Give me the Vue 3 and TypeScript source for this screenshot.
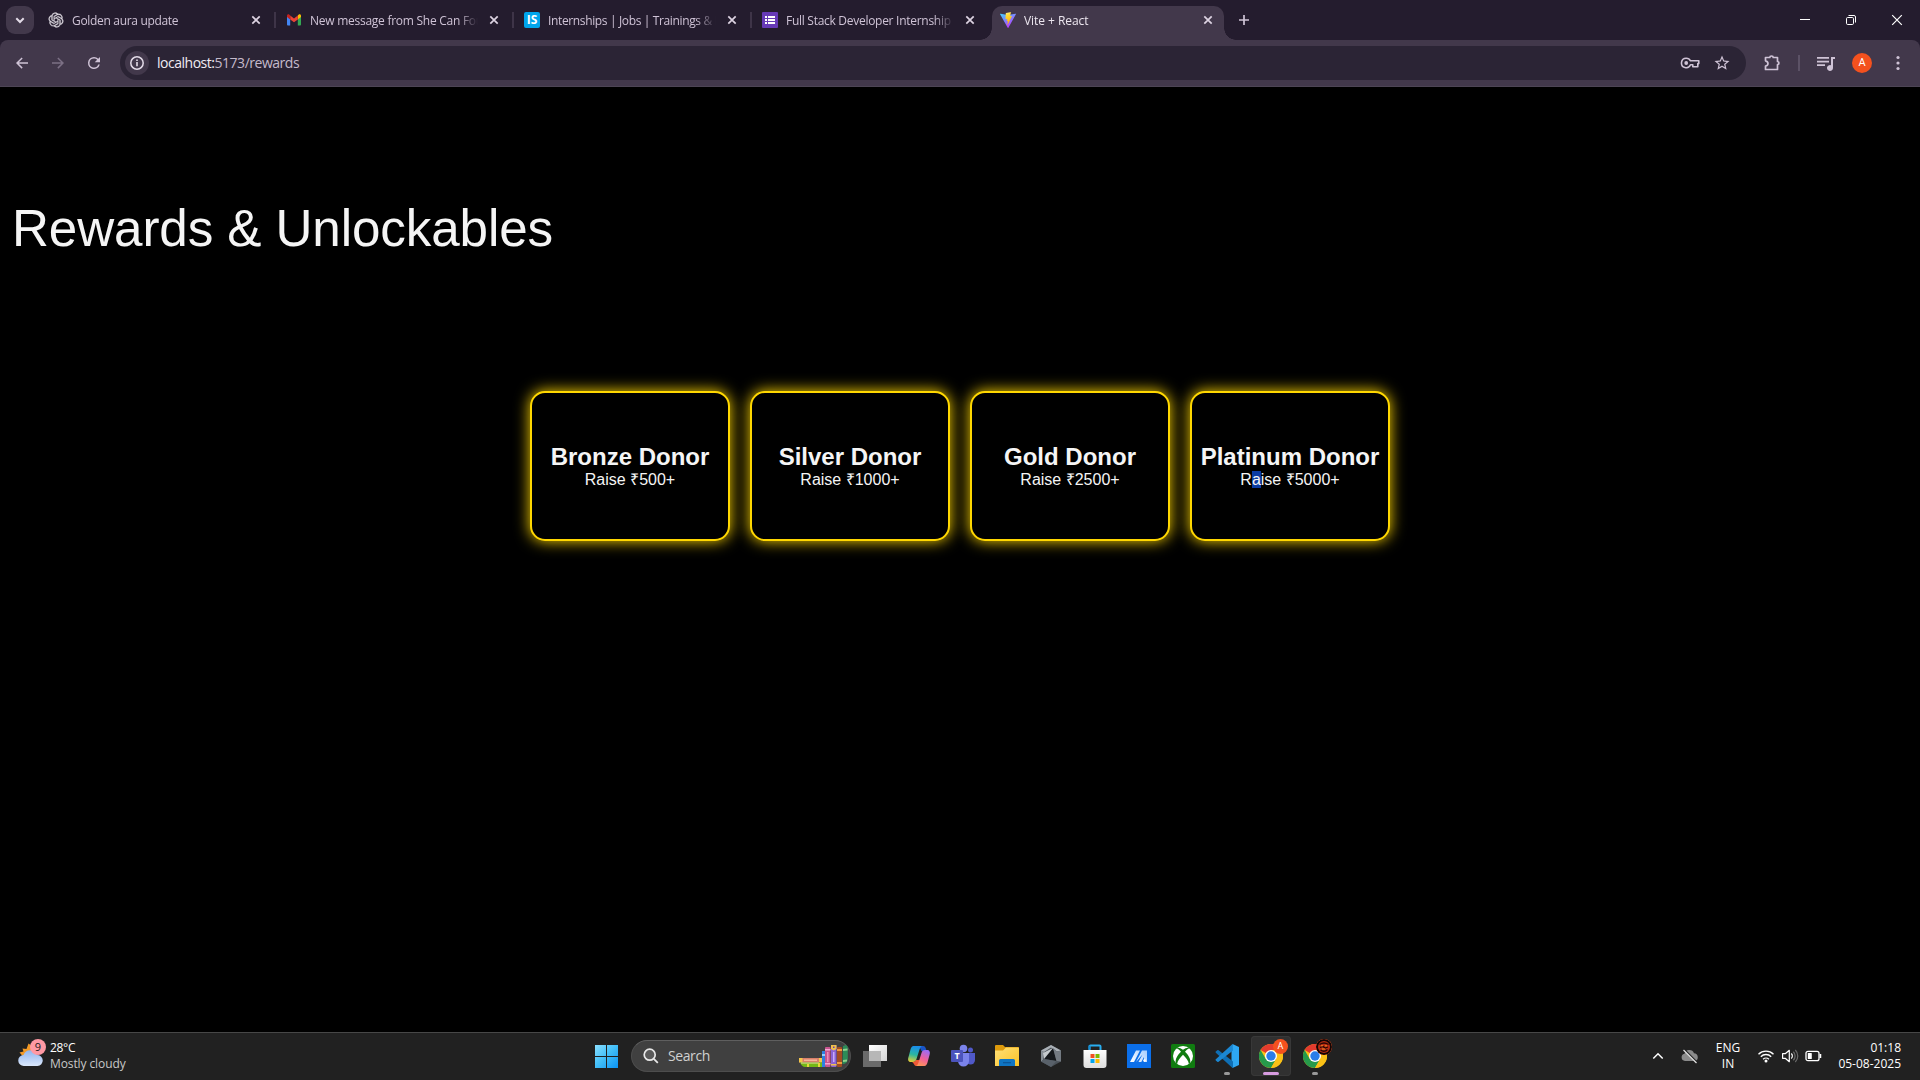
<script setup lang="ts">
interface Tab {
  id: string
  title: string
  spacing: number
  active?: boolean
}

interface Reward {
  name: string
  lead: string
  marked: string
  rest: string
}

const tabs: Tab[] = [
  { id: 'chat', title: 'Golden aura update', spacing: -0.32 },
  { id: 'mail', title: 'New message from She Can Fou', spacing: -0.26 },
  { id: 'is', title: 'Internships | Jobs | Trainings & P', spacing: -0.36 },
  { id: 'form', title: 'Full Stack Developer Internship -', spacing: -0.28 },
  { id: 'vite', title: 'Vite + React', spacing: -0.05, active: true },
]

const rewards: Reward[] = [
  { name: 'Bronze Donor', lead: 'Raise ₹500+', marked: '', rest: '' },
  { name: 'Silver Donor', lead: 'Raise ₹1000+', marked: '', rest: '' },
  { name: 'Gold Donor', lead: 'Raise ₹2500+', marked: '', rest: '' },
  { name: 'Platinum Donor', lead: 'R', marked: 'a', rest: 'ise ₹5000+' },
]
</script>

<template>
  <div class="screen">
    <header class="tabstrip">
      <div class="tab-search">
        <svg width="28" height="28" viewBox="0 0 28 28"><path d="M10.3 12.3l3.7 3.7 3.7-3.7" fill="none" stroke="#e3dbe8" stroke-width="2" /></svg>
      </div>
      <template v-for="(tab, i) in tabs" :key="tab.id">
        <div class="tab" :class="{ active: tab.active }">
          <svg v-if="tab.id === 'chat'" class="favicon" viewBox="-1 -1 26 26"><path fill="#dcd7df" stroke="#dcd7df" stroke-width=".5" d="M22.2819 9.8211a5.9847 5.9847 0 0 0-.5157-4.9108 6.0462 6.0462 0 0 0-6.5098-2.9A6.0651 6.0651 0 0 0 4.9807 4.1818a5.9847 5.9847 0 0 0-3.9977 2.9 6.0462 6.0462 0 0 0 .7427 7.0966 5.98 5.98 0 0 0 .511 4.9107 6.051 6.051 0 0 0 6.5146 2.9001A5.9847 5.9847 0 0 0 13.2599 24a6.0557 6.0557 0 0 0 5.7718-4.2058 5.9894 5.9894 0 0 0 3.9977-2.9001 6.0557 6.0557 0 0 0-.7475-7.0729zm-9.022 12.6081a4.4755 4.4755 0 0 1-2.8764-1.0408l.1419-.0804 4.7783-2.7582a.7948.7948 0 0 0 .3927-.6813v-6.7369l2.02 1.1686a.071.071 0 0 1 .038.052v5.5826a4.504 4.504 0 0 1-4.4945 4.4944zm-9.6607-4.1254a4.4708 4.4708 0 0 1-.5346-3.0137l.142.0852 4.783 2.7582a.7712.7712 0 0 0 .7806 0l5.8428-3.3685v2.3324a.0804.0804 0 0 1-.0332.0615L9.74 19.9502a4.4992 4.4992 0 0 1-6.1408-1.6464zM2.3408 7.8956a4.485 4.485 0 0 1 2.3655-1.9728V11.6a.7664.7664 0 0 0 .3879.6765l5.8144 3.3543-2.0201 1.1685a.0757.0757 0 0 1-.071 0l-4.8303-2.7865A4.504 4.504 0 0 1 2.3408 7.872zm16.5963 3.8558L13.1038 8.364 15.1192 7.2a.0757.0757 0 0 1 .071 0l4.8303 2.7913a4.4944 4.4944 0 0 1-.6765 8.1042v-5.6772a.79.79 0 0 0-.407-.667zm2.0107-3.0231l-.142-.0852-4.7735-2.7818a.7759.7759 0 0 0-.7854 0L9.409 9.2297V6.8974a.0662.0662 0 0 1 .0284-.0615l4.8303-2.7866a4.4992 4.4992 0 0 1 6.6802 4.66zM8.3065 12.863l-2.02-1.1638a.0804.0804 0 0 1-.038-.0567V6.0742a4.4992 4.4992 0 0 1 7.3757-3.4537l-.142.0805L8.704 5.459a.7948.7948 0 0 0-.3927.6813zm1.0976-2.3654l2.602-1.4998 2.6069 1.4998v2.9994l-2.5974 1.4997-2.6067-1.4997Z" /></svg>
          <svg v-else-if="tab.id === 'mail'" class="favicon" viewBox="0 0 16 16">
            <path d="M1 4.2V12.6a.9.9 0 0 0 .9.9H4.2V7z" fill="#4285f4" />
            <path d="M15 4.2V12.6a.9.9 0 0 1-.9.9H11.8V7z" fill="#34a853" />
            <path d="M11.8 3.6V7.4L15 5V3.8c0-1.3-1.4-1.9-2.4-1.1z" fill="#fbbc04" />
            <path d="M4.2 7.4V3.6L8 6.4l3.8-2.8v3.8L8 10.2z" fill="#ea4335" />
            <path d="M1 3.8V5l3.2 2.4V3.6l-.8-.9C2.4 1.9 1 2.5 1 3.8z" fill="#c5221f" />
          </svg>
          <span v-else-if="tab.id === 'is'" class="favicon is-logo">IS</span>
          <svg v-else-if="tab.id === 'form'" class="favicon" viewBox="0 0 16 16">
            <rect width="16" height="16" rx="1" fill="#673ab7" />
            <path d="M3 4h2v2H3zM6 4h7v2H6zM3 7h2v2H3zM6 7h7v2H6zM3 10h2v2H3zM6 10h7v2H6z" fill="#fff" />
          </svg>
          <svg v-else class="favicon" viewBox="0 0 16 16">
            <defs>
              <linearGradient id="va" x1="0" y1="0" x2=".6" y2="1"><stop offset="0" stop-color="#41d1ff" /><stop offset="1" stop-color="#bd34fe" /></linearGradient>
              <linearGradient id="vb" x1=".4" y1="0" x2=".6" y2="1"><stop offset="0" stop-color="#ffea83" /><stop offset=".2" stop-color="#ffdd35" /><stop offset="1" stop-color="#ffa800" /></linearGradient>
            </defs>
            <path d="M15.9 2.3L8.4 15.7a.4.4 0 0 1-.7 0L.1 2.3a.4.4 0 0 1 .4-.6L8 3l7.500-1.300a.4.4 0 0 1 .4.6z" fill="url(#va)" />
            <path d="M11.5 0L6 1.100a.2.2 0 0 0-.2.2L5.500 7c0 .1.1.2.2.2l1.600-.4-.5 2.300c0 .2.1.3.3.2l.9-.3-.7 3.500c0 .3.2.3.3.1l.2-.2 4.100-8.200c.1-.1 0-.3-.2-.3l-1.600.3.9-3.900c.1-.2 0-.3-.2-.3z" fill="url(#vb)" />
          </svg>
          <span class="tab-title" :style="{ letterSpacing: tab.spacing + 'px' }">{{ tab.title }}</span>
          <svg class="tab-close" width="16" height="16" viewBox="0 0 16 16"><path d="M4.300 4.300l7.400 7.400M11.700 4.300l-7.400 7.400" stroke="#ddd3e2" stroke-width="1.700" /></svg>
        </div>
        <i v-if="i < 3" class="tab-sep"></i>
        <i v-else-if="i === 3" class="tab-sep hidden"></i>
      </template>
      <svg class="new-tab" width="28" height="28" viewBox="0 0 28 28"><path d="M14 9v10M9 14h10" stroke="#cfc4d6" stroke-width="1.700" /></svg>
      <div class="window-controls">
        <svg width="46" height="40" viewBox="0 0 46 40"><path d="M18 19.500h10" stroke="#fff" /></svg>
        <svg width="46" height="40" viewBox="0 0 46 40"><g fill="none" stroke="#fff"><rect x="18.500" y="17.500" width="7" height="7" rx="1.200" /><path d="M20.500 15.500H26a1.500 1.500 0 0 1 1.500 1.500v5.500" /></g></svg>
        <svg width="46" height="40" viewBox="0 0 46 40"><path d="M18.200 15.200l9.600 9.600M27.800 15.200l-9.600 9.600" stroke="#fff" stroke-width="1.200" /></svg>
      </div>
    </header>

    <div class="toolbar-frame">
      <nav class="toolbar">
        <svg class="nav-btn" viewBox="0 0 24 24"><path fill="#cfc3d6" d="M20 11H7.800l5.100-5.100L11.500 4.500 4 12l7.500 7.500 1.400-1.400L7.800 13H20z" transform="matrix(.9 0 0 .9 1.2 1.2)" /></svg>
        <svg class="nav-btn" viewBox="0 0 24 24"><path fill="#7c7085" d="M4 11h12.200l-5.100-5.100 1.400-1.400L20 12l-7.500 7.500-1.400-1.400 5.100-5.100H4z" transform="matrix(.9 0 0 .9 1.2 1.2)" /></svg>
        <svg class="nav-btn" viewBox="0 0 24 24"><path fill="#cfc3d6" d="M17.650 6.350A7.958 7.958 0 0 0 12 4a8 8 0 1 0 7.730 10h-2.080A6 6 0 1 1 12 6c1.660 0 3.140.69 4.220 1.780L13 11h7V4z" transform="matrix(.9 0 0 .9 1.2 1.2)" /></svg>
        <div class="omnibox">
          <span class="site-info">
            <svg width="16" height="16" viewBox="0 0 16 16"><circle cx="8" cy="8" r="6.200" fill="none" stroke="#e3dbe8" stroke-width="1.500" /><path d="M8 7v4.300M8 4.500v1.600" stroke="#e3dbe8" stroke-width="1.600" /></svg>
          </span>
          <span class="url"><b>localhost:</b>5173/rewards</span>
          <svg class="key" width="20" height="20" viewBox="0 0 20 20"><path d="M6.200 5.300a4.700 4.700 0 1 0 4.300 6.500h2.300v2h5v-3.200h1V7.800h-8.300a4.700 4.700 0 0 0-4.300-2.500z" fill="none" stroke="#cfc3d6" stroke-width="1.600" stroke-linejoin="round" /><circle cx="6.200" cy="10" r="1.900" fill="#cfc3d6" /></svg>
          <svg class="star" width="18" height="18" viewBox="0 0 24 24"><path fill="#cfc3d6" d="M22 9.240l-7.190-.62L12 2 9.190 8.630 2 9.240l5.460 4.730L5.820 21 12 17.270 18.180 21l-1.630-7.030L22 9.240zM12 15.400l-3.760 2.270 1-4.280-3.320-2.880 4.380-.38L12 6.100l1.710 4.040 4.380.38-3.320 2.880 1 4.280L12 15.400z" /></svg>
        </div>
        <svg class="ext" width="20" height="20" viewBox="0 0 20 20"><path d="M3.500 4.500h4.300a1.700 1.500 0 0 1 3.400 0H15.500v4a1.400 1.600 0 0 1 0 3.200v4.800H3.500v-3.300c3.300-.6 3.300-4.800 0-5.400V4.500z" fill="none" stroke="#cfc3d6" stroke-width="1.700" stroke-linejoin="round" /></svg>
        <i class="bar-sep"></i>
        <svg class="music" width="18" height="18" viewBox="3 3 18 18"><path fill="#cfc3d6" d="M15 6H3v1.700h12zM15 9.700H3v1.700h12zM3 15h8v-1.700H3zM17 6v8.180A3 3 0 1 0 19 17V8h3V6z" /></svg>
        <span class="avatar">A</span>
        <svg class="dots" width="6" height="18" viewBox="0 0 6 18"><g fill="#cfc3d6"><circle cx="3" cy="3.500" r="1.600" /><circle cx="3" cy="9" r="1.600" /><circle cx="3" cy="14.500" r="1.600" /></g></svg>
      </nav>
    </div>

    <main class="page">
      <h1>Rewards &amp; Unlockables</h1>
      <section class="cards">
        <article v-for="r in rewards" :key="r.name" class="card">
          <h2>{{ r.name }}</h2>
          <p>{{ r.lead }}<mark v-if="r.marked">{{ r.marked }}</mark>{{ r.rest }}</p>
        </article>
      </section>
    </main>

    <footer class="taskbar">
      <div class="weather">
        <span class="weather-icon">
          <svg width="28" height="30" viewBox="0 0 28 30">
            <defs><linearGradient id="cl" x1="0" y1="0" x2="0" y2="1"><stop offset="0" stop-color="#8fb4ee" /><stop offset="1" stop-color="#dbe8fc" /></linearGradient></defs>
            <path d="M1.500 13.500l4-1-1-3 4 .5 2-5.500 4 3 4 3v8H6z" fill="#f39a26" />
            <path d="M6 27a5.500 5.500 0 0 1-.5-11 7.200 7.200 0 0 1 13.500 0A5.500 5.500 0 0 1 19.500 27z" fill="url(#cl)" />
          </svg>
          <em>9</em>
        </span>
        <span class="weather-text"><span class="temp">28°C</span><span class="cond">Mostly cloudy</span></span>
      </div>

      <div class="apps">
        <div class="start">
          <svg width="23" height="23" viewBox="0 0 23 23">
            <defs><linearGradient id="win" gradientUnits="userSpaceOnUse" x1="0" y1="0" x2="23" y2="23"><stop offset="0" stop-color="#8ae0ff" /><stop offset=".5" stop-color="#40bdf8" /><stop offset="1" stop-color="#0a93f5" /></linearGradient></defs>
            <path d="M0 0h11v11H0zM12 0h11v11H12zM0 12h11v11H0zM12 12h11v11H12z" fill="url(#win)" />
          </svg>
        </div>
        <div class="search">
          <svg width="16" height="16" viewBox="0 0 16 16"><circle cx="6.700" cy="6.700" r="5.500" fill="#5a5a5a" stroke="#e8e8e8" stroke-width="1.700" /><path d="M10.800 10.800l4 4" stroke="#e8e8e8" stroke-width="1.800" /></svg>
          <span>Search</span>
          <svg class="books" width="49" height="24" viewBox="0 0 49 24">
            <rect x="0" y="14" width="23" height="4.500" rx="1" fill="#d9806a" /><rect x="0" y="14" width="3.500" height="4.500" fill="#f4c64c" /><rect x="5" y="15.500" width="13" height="1.500" fill="#f7b59a" /><rect x="20" y="14" width="3" height="4.500" fill="#f4c64c" />
            <path d="M1 18.500h22V23H6c-2 0-4-2-5-4.500z" fill="#74b816" /><path d="M2 18.500h18v1H2z" fill="#e8e2a0" /><path d="M8 20h2v3H8zM19 19h2v4h-2z" fill="#e7d63e" />
            <rect x="23" y="7" width="3" height="16" fill="#2f7fe0" /><rect x="23" y="10" width="3" height="2" fill="#8cd0ff" />
            <rect x="26" y="3" width="5.500" height="20" rx="1" fill="#c6548f" /><path d="M26 5h5.500v1.500H26zM26 19h5.500v1.500H26z" fill="#f5a7d0" /><path d="M28 8h1.500v10H28z" fill="#ee8cb9" />
            <rect x="32" y="1" width="5.500" height="22" rx="1" fill="#8b63d6" /><path d="M32 1h5.500v4l-2.700 1.500L32 5z" fill="#f0c04b" /><path d="M34 2.500h1.500V4H34z" fill="#6a3fb0" /><path d="M34 8h1.500v10H34z" fill="#c7acfa" /><path d="M32 20h5.500v1.500H32z" fill="#f0c04b" />
            <rect x="38" y="3" width="5" height="20" rx="1" fill="#a34b22" /><path d="M38 5h5v2h-5zM38 18h5v2h-5z" fill="#f09a3d" />
            <path d="M44 2l3-1c2 1 2 3 1.800 6v8c0 3-2.300 5-5.300 5z" fill="#2c8c57" /><path d="M44 5l4.500-.5v2l-4.500.5zM44 16l4-.5v2l-4 .5z" fill="#8ed18d" />
          </svg>
        </div>

        <div class="app">
          <svg width="24" height="24" viewBox="0 0 24 24">
            <defs><linearGradient id="tv" x1="0" y1="0" x2="1" y2="1"><stop offset="0" stop-color="#fff" /><stop offset="1" stop-color="#d6d6d6" /></linearGradient></defs>
            <rect x="6" y="1" width="18" height="16" fill="url(#tv)" /><rect x="0" y="7" width="18" height="16" fill="#6a6a6a" /><rect x="6" y="7" width="12" height="10" fill="#b7b7b7" />
          </svg>
        </div>

        <div class="app">
          <svg width="24" height="24" viewBox="0 0 24 24">
            <defs>
              <linearGradient id="c1" x1=".3" y1="0" x2=".1" y2="1"><stop offset="0" stop-color="#1a8fe8" /><stop offset=".5" stop-color="#2bb6a0" /><stop offset="1" stop-color="#f2cf2d" /></linearGradient>
              <linearGradient id="c2" x1=".6" y1="0" x2=".2" y2="1"><stop offset="0" stop-color="#a06bf0" /><stop offset=".5" stop-color="#f0609a" /><stop offset="1" stop-color="#ff9a50" /></linearGradient>
            </defs>
            <path d="M12 2h4c2 0 2.500 1.500 3 3l.5 2h-5z" fill="#1a55c8" />
            <path d="M6.500 2H15c-1.500.6-2 2-2.500 3.500L9.500 15c-.7 2.200-1.500 3-3.500 3H4c-2.500 0-3.500-2-2.500-5l2-7.500C4.200 3.200 5 2 6.500 2z" fill="url(#c1)" />
            <path d="M5 18c2 0 3.500-.5 4-2h5l-1.500 4c-.7 1.600-1.500 2-3 2C7 22 7.500 19.500 5 18z" fill="#ef5a36" />
            <path d="M17.500 22H9c1.500-.6 2-2 2.500-3.500L14.500 9c.7-2.200 1.500-3 3.500-3h2c2.500 0 3.500 2 2.500 5l-2 7.500c-.7 2.300-1.500 3.500-3 3.500z" fill="url(#c2)" />
          </svg>
        </div>

        <div class="app">
          <span class="teams">
            <svg width="24" height="24" viewBox="0 0 24 24">
              <circle cx="19.500" cy="6" r="2.500" fill="#5059c9" /><path d="M15 9h9v7a4.500 4.500 0 0 1-9 0z" fill="#5059c9" />
              <circle cx="12.500" cy="4.500" r="3.800" fill="#7b83eb" /><path d="M7 9h11v8a5.500 5.500 0 0 1-11 0z" fill="#7b83eb" />
              <rect x="0" y="6" width="12" height="12" rx="1" fill="#4b53bc" />
            </svg>
            <em>T</em>
          </span>
        </div>

        <div class="app">
          <svg width="24" height="24" viewBox="0 0 24 24">
            <defs><linearGradient id="fo" x1="0" y1="0" x2="1" y2="1"><stop offset="0" stop-color="#ffe07a" /><stop offset="1" stop-color="#fcc324" /></linearGradient></defs>
            <path d="M0 2a1 1 0 0 1 1-1h7l2 2h13a1 1 0 0 1 1 1v5H0z" fill="#dd9a0c" /><path d="M0 6.500h8L11 3.500h12.500a.5.5 0 0 1 .5.5V22H0z" fill="url(#fo)" /><path d="M4 22v-5.500A1.500 1.500 0 0 1 5.500 15h13a1.500 1.500 0 0 1 1.500 1.500V22z" fill="#0f75c4" /><path d="M8 18h8v1.300H8z" fill="#0b579b" />
          </svg>
        </div>

        <div class="app">
          <svg width="24" height="24" viewBox="0 0 24 24">
            <path d="M12 1l10 5.500v11L12 23 2 17.500v-11z" fill="#4b5259" /><path d="M12 1l10 5.500-4 1L12 3.500 5 8 2 6.500z" fill="#aab0b6" /><path d="M2 6.500L5 8l-1 8-2 1.500z" fill="#878e95" /><path d="M14 4l3.500 13L5 15z" fill="#16191d" /><path d="M14 4L5 15l-1-6z" fill="#c5cace" /><path d="M14 4l4 3.500 4-1v11l-4.500-.5z" fill="#737a82" /><path d="M5 15l12.500 2L12 23 2 17.500z" fill="#59616a" />
          </svg>
        </div>

        <div class="app">
          <svg width="24" height="24" viewBox="0 0 24 24">
            <defs><linearGradient id="st" x1="0" y1="0" x2="0" y2="1"><stop offset="0" stop-color="#fff" /><stop offset="1" stop-color="#dedede" /></linearGradient></defs>
            <path d="M6.500 6V2.500a1 1 0 0 1 1-1h9a1 1 0 0 1 1 1V6" fill="none" stroke="#29aef0" stroke-width="2" /><path d="M.5 6h23v15a3 3 0 0 1-3 3h-17a3 3 0 0 1-3-3z" fill="url(#st)" /><path d="M6.500 1.500v4" stroke="#158bd0" stroke-width="2" />
            <path d="M7.500 10h4v4h-4z" fill="#f25022" /><path d="M12.500 10h4v4h-4z" fill="#7fba00" /><path d="M7.500 15h4v4h-4z" fill="#00a4ef" /><path d="M12.500 15h4v4h-4z" fill="#ffb900" />
          </svg>
        </div>

        <div class="app">
          <svg width="24" height="24" viewBox="0 0 24 24">
            <defs><linearGradient id="my" gradientUnits="userSpaceOnUse" x1="3" y1="18" x2="20" y2="7"><stop offset="0" stop-color="#fff" /><stop offset="1" stop-color="#a5cdff" /></linearGradient></defs>
            <rect width="24" height="24" fill="#0b6fea" /><path d="M3 18L9 6.500h4L7 18zM9 18l6-11.500h5V18h-3V13l-2.700 5h-2.800l4-7.500z" fill="url(#my)" /><circle cx="17.500" cy="16.500" r="1.300" fill="#fff" />
          </svg>
        </div>

        <div class="app">
          <svg width="24" height="24" viewBox="0 0 24 24">
            <rect width="24" height="24" rx="1.500" fill="#107c10" /><circle cx="12" cy="12" r="10" fill="#fff" />
            <path d="M12 5.800C9.500 4 7 3 5.200 4.300 7.500 4.800 9 6.500 10 7.700 6.500 11 4 15 4.800 18.900c1 1.200 1.300 1.200 1.300 1.200.4-3.300 3-6.600 5.900-9.300 2.900 2.700 5.500 6 5.900 9.300l1.300-1.200C20 15 17.500 11 14 7.700c1-1.200 2.500-2.900 4.800-3.400C17 3 14.500 4 12 5.800z" fill="#107c10" />
          </svg>
        </div>

        <div class="app running">
          <svg width="24" height="24" viewBox="0 0 24 24">
            <path d="M17.500 0L24 3v18l-6.500 3-1-5V5z" fill="#2ea7f2" /><path d="M17.500 24L.8 8.800a.8.8 0 0 1 0-1.200l1.500-1.300a1 1 0 0 1 1.300 0L18 17.500v6z" fill="#0f6fb5" /><path d="M17.500 0L.8 15.200a.8.8 0 0 0 0 1.200l1.500 1.300a1 1 0 0 0 1.300 0L18 6.500z" fill="#1b87d2" />
          </svg>
        </div>

        <div v-for="n in 2" :key="n" class="app running chrome" :class="{ current: n === 1 }">
          <svg width="24" height="24" viewBox="0 0 24 24">
            <circle cx="12" cy="12" r="12" fill="#fbc116" />
            <path d="M12 12L1.600 6A12 12 0 0 1 22.400 6z" fill="#e33b2e" />
            <path d="M1.600 6A12 12 0 0 0 12 24L17.200 15 12 12 6.800 15z" fill="#269a4b" />
            <path d="M12 6h10.400A12 12 0 0 1 12 24l5.200-9z" fill="#fbc116" />
            <circle cx="12" cy="12" r="6" fill="#fff" /><circle cx="12" cy="12" r="4.700" fill="#2a7de9" />
          </svg>
          <em v-if="n === 1" class="badge">A</em>
          <svg v-else class="badge dark" width="16" height="16" viewBox="0 0 16 16">
            <circle cx="8" cy="8" r="8" fill="#120504" /><circle cx="8" cy="8" r="6" fill="#b72b12" /><path d="M3.500 5.500c3-2 6-2 9 0M4 8.500l3-1 2 1.500 3-1M4.500 11c2 1.500 5 1.500 7-.5" fill="none" stroke="#240704" stroke-width="1.300" /><path d="M5 6.800h2M9 6.800h2M6 10h3" stroke="#f28a22" />
          </svg>
        </div>
      </div>

      <div class="tray">
        <svg class="chev" width="12" height="12" viewBox="0 0 12 12"><path d="M1.300 8.500L6 3.800l4.700 4.700" fill="none" stroke="#fff" stroke-width="1.500" /></svg>
        <svg class="cloud" width="18" height="16" viewBox="0 0 18 16"><path d="M4 13a3.700 3.700 0 0 1-.5-7.300 5 5 0 0 1 9.500-.5A4 4 0 0 1 14 13z" fill="#8b8b8b" /><path d="M3 1.500l12.500 12.500" stroke="#202020" stroke-width="2" /><path d="M2.500 2l13 13" stroke="#e2e2e2" stroke-width="1.200" /></svg>
        <span class="lang"><span>ENG</span><span>IN</span></span>
        <svg width="18" height="16" viewBox="0 0 18 16"><g fill="none" stroke="#fff" stroke-width="1.300"><path d="M1.500 6.200a10.600 10.600 0 0 1 15 0" /><path d="M3.800 8.700a7.300 7.300 0 0 1 10.400 0" /><path d="M6.100 11.200a4.200 4.200 0 0 1 5.800 0" /></g><circle cx="9" cy="13" r="1.500" fill="#fff" /></svg>
        <svg class="vol" width="18" height="16" viewBox="0 0 18 16"><g fill="none" stroke-width="1.200"><path d="M1.600 5.700h2.600L8.300 2.300v11.400L4.200 10.300H1.600z" stroke="#fff" stroke-linejoin="round" /><path d="M10.300 5.500a3.500 3.500 0 0 1 0 5" stroke="#fff" /><path d="M12.300 3.700a6 6 0 0 1 0 8.600M14.300 2a8.500 8.500 0 0 1 0 12" stroke="#6b6b6b" /></g></svg>
        <svg class="batt" width="18" height="12" viewBox="0 0 18 12"><rect x="1" y="1.300" width="13" height="9.400" rx="2" fill="none" stroke="#fff" stroke-width="1.300" /><rect x="2.800" y="3" width="4" height="6" rx=".6" fill="#fff" /><path d="M15.400 4v4" stroke="#fff" stroke-width="1.700" /></svg>
        <span class="clock"><span>01:18</span><span>05-08-2025</span></span>
      </div>
    </footer>
  </div>
</template>

<style>
body {
  margin: 0;
  background: #000;
  overflow: hidden;
}
</style>

<style scoped>
.screen {
  width: 1920px;
  height: 1080px;
  display: flex;
  flex-direction: column;
  background: #000;
  font-family: "Open Sans", "Noto Sans", sans-serif;
  overflow: hidden;
}
svg { display: block; flex: none; }
em { font-style: normal; }

.tabstrip {
  height: 40px;
  display: flex;
  align-items: center;
  background: #241c2e;
  flex: none;
}
.tab-search {
  width: 28px;
  height: 28px;
  margin: 0 6px;
  border-radius: 9px;
  background: #42384b;
}
.tab {
  position: relative;
  box-sizing: border-box;
  width: 232px;
  height: 34px;
  margin-top: 6px;
  padding: 0 8px 6px;
  display: flex;
  align-items: center;
  gap: 8px;
  color: #cfc3d6;
  font-size: 12px;
}
.tab.active {
  background: #42384b;
  border-radius: 10px 10px 0 0;
  color: #ece6ef;
}
.tab.active::before,
.tab.active::after {
  content: "";
  position: absolute;
  bottom: 0;
  width: 12px;
  height: 12px;
}
.tab.active::before {
  left: -12px;
  background: radial-gradient(circle at 0 0, transparent 11.5px, #42384b 12px);
}
.tab.active::after {
  right: -12px;
  background: radial-gradient(circle at 100% 0, transparent 11.5px, #42384b 12px);
}
.favicon { width: 16px; height: 16px; flex: none; }
.is-logo {
  border-radius: 2px;
  background: #00a5ec;
  color: #fff;
  font: bold 12px/16px "Open Sans", sans-serif;
  text-align: center;
}
.tab-title {
  width: 168px;
  padding-top: 2px;
  line-height: 18px;
  white-space: nowrap;
  -webkit-mask-image: linear-gradient(90deg, #000 148px, transparent 168px);
  mask-image: linear-gradient(90deg, #000 148px, transparent 168px);
}
.tab-sep { width: 2px; height: 16px; margin: 0 2px; background: #3e3448; }
.tab-sep.hidden { background: transparent; }
.new-tab { margin-left: 6px; }
.window-controls { display: flex; margin-left: auto; }

.toolbar-frame { flex: none; background: #241c2e; }
.toolbar {
  height: 47px;
  box-sizing: border-box;
  padding: 0 19px 1px 12px;
  display: flex;
  align-items: center;
  background: #42384b;
  border-bottom: 1px solid #4d4555;
  border-radius: 8px 8px 0 0;
}
.nav-btn { width: 20px; height: 20px; margin-right: 16px; }
.omnibox {
  flex: none;
  width: 1626px;
  height: 34px;
  box-sizing: border-box;
  padding: 0 15px 0 5px;
  display: flex;
  align-items: center;
  border-radius: 17px;
  background: #2b2435;
}
.site-info {
  width: 24px;
  height: 24px;
  display: flex;
  align-items: center;
  justify-content: center;
  border-radius: 50%;
  background: #42384b;
}
.url {
  margin-left: 8px;
  color: #c4bacb;
  font-size: 14px;
  line-height: 20px;
  letter-spacing: -0.48px;
}
.url b { font-weight: 400; color: #f0ebf3; }
.key { margin-left: auto; margin-right: 13px; }
.ext { margin-left: 16px; }
.bar-sep { flex: none; width: 2px; height: 16px; margin: 0 17px 0 16px; background: #5c5266; }
.avatar {
  flex: none;
  width: 20px;
  height: 20px;
  margin: 0 23px 0 17px;
  border-radius: 50%;
  background: #f4511e;
  color: #fff;
  font: 11px/20px Roboto, sans-serif;
  text-align: center;
}

.page {
  flex: 1;
  display: flex;
  flex-direction: column;
  align-items: flex-start;
  font-family: "Liberation Sans", Arial, sans-serif;
  color: #f5f5f5;
}
.page h1 {
  margin: 112px 0 133px 12px;
  font-size: 51.2px;
  font-weight: 400;
  line-height: 59px;
  letter-spacing: -0.11px;
  white-space: nowrap;
}
.cards { display: flex; gap: 20px; align-self: center; }
.card {
  box-sizing: border-box;
  width: 200px;
  height: 150px;
  display: flex;
  flex-direction: column;
  align-items: center;
  justify-content: center;
  border: 2px solid #ffd700;
  border-radius: 15px;
  background: #000;
  box-shadow: 0 0 15px #ffd700;
}
.card h2 { margin: 0; padding-bottom: 2px; font-size: 24px; line-height: 25px; white-space: nowrap; }
.card p { margin: 0; font-size: 16px; line-height: 18px; }
.card mark { background: #0a3ba3; color: inherit; }

.taskbar {
  height: 48px;
  box-sizing: border-box;
  border-top: 1px solid #474747;
  padding-bottom: 1px;
  display: flex;
  align-items: center;
  flex: none;
  background: #212121;
  color: #fff;
  font-size: 12px;
  line-height: 16px;
}
.weather { width: 584px; display: flex; align-items: center; }
.weather-icon { position: relative; margin: -4px 4px 0 18px; }
.weather-icon em {
  position: absolute;
  left: 12px;
  top: 0;
  width: 16px;
  height: 16px;
  border-radius: 50%;
  background: #ff99a4;
  color: #1a1a1a;
  font-size: 11px;
  text-align: center;
}
.weather-text { display: flex; flex-direction: column; }
.temp { letter-spacing: -0.3px; }
.cond { color: #c8c8c8; letter-spacing: -0.1px; }
.apps { display: flex; align-items: center; height: 46px; }
.start { width: 45px; display: flex; justify-content: center; }
.search {
  box-sizing: border-box;
  width: 220px;
  height: 32px;
  margin: 0 2px;
  padding: 0 2px 0 11px;
  display: flex;
  align-items: center;
  border-radius: 16px;
  background: #404040;
  border: 1px solid #4d4d4d;
  border-top-color: #5f5f5f;
  color: #d0d0d0;
  font-size: 14px;
}
.search span { margin-left: 9px; letter-spacing: -0.4px; }
.books { margin-left: auto; }
.app {
  position: relative;
  width: 44px;
  height: 40px;
  display: flex;
  align-items: center;
  justify-content: center;
}
.running::after {
  content: "";
  position: absolute;
  left: 19px;
  bottom: 1px;
  width: 6px;
  height: 3px;
  border-radius: 2px;
  background: #999;
}
.current { width: 40px; margin: 0 2px; border-radius: 4px; background: #303030; box-shadow: inset 0 0 0 1px #383838; }
.current::after { left: 12px; width: 16px; background: #d79be0; }
.badge {
  position: absolute;
  left: 22px;
  top: 3px;
  width: 15px;
  height: 15px;
  border-radius: 50%;
  background: #f4511e;
  font: 9px/15px Roboto, sans-serif;
  text-align: center;
}
.badge.dark { left: 23px; width: 16px; height: 16px; }
.teams { position: relative; }
.teams em {
  position: absolute;
  left: 0;
  top: 6px;
  width: 12px;
  font: bold 9px/12px "Open Sans", sans-serif;
  text-align: center;
}
.tray { display: flex; align-items: center; margin-left: auto; margin-right: 19px; }
.cloud { margin: 0 15px 0 17px; }
.lang { width: 28px; margin-right: 15px; display: flex; flex-direction: column; align-items: center; }
.vol { margin-left: 6px; }
.batt { margin: 0 15px 0 6px; }
.clock { width: 63px; display: flex; flex-direction: column; align-items: flex-end; white-space: nowrap; }
</style>
